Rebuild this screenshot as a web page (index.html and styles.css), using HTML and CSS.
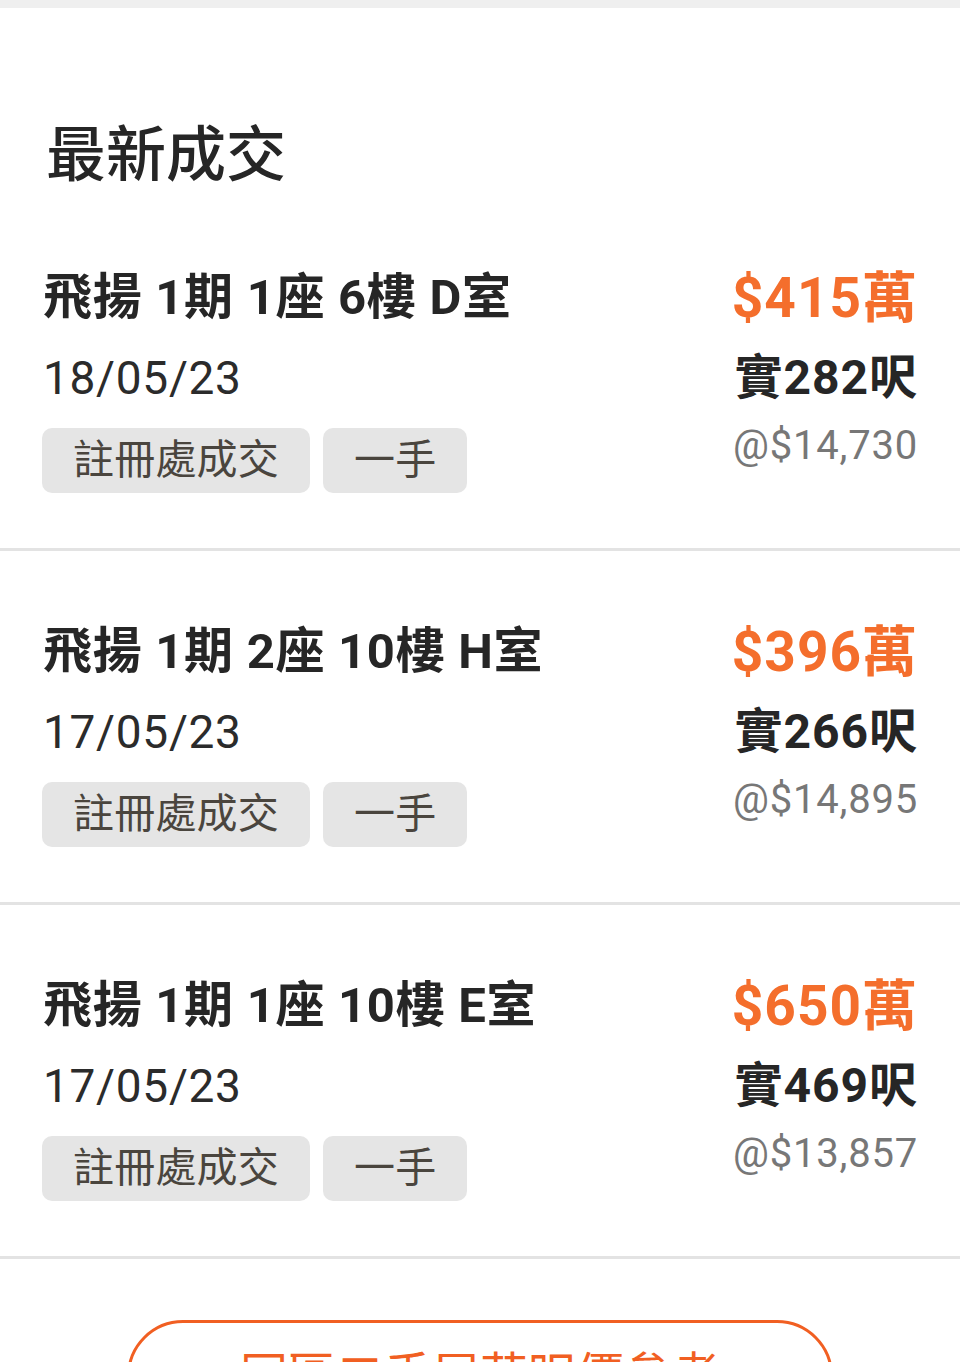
FILE: index.html
```html
<!DOCTYPE html>
<html lang="zh-Hant">
<head>
    <meta charset="UTF-8">
    <meta name="viewport" content="width=device-width, initial-scale=1.0">
    <title>最新成交</title>
    <link rel="stylesheet" href="styles.css">
</head>
<body>
    <div class="topbar"></div>

    <section class="deals">
        <h2 class="deals-title">最新成交</h2>

        <div class="deal">
            <div class="deal-info">
                <div class="deal-name">飛揚 1期 1座 6樓 D室</div>
                <div class="deal-date">18/05/23</div>
                <div class="tags">
                    <span class="tag">註冊處成交</span>
                    <span class="tag">一手</span>
                </div>
            </div>
            <div class="deal-price">
                <div class="price">$415萬</div>
                <div class="area">實282呎</div>
                <div class="unit">@$14,730</div>
            </div>
        </div>

        <div class="deal">
            <div class="deal-info">
                <div class="deal-name">飛揚 1期 2座 10樓 H室</div>
                <div class="deal-date">17/05/23</div>
                <div class="tags">
                    <span class="tag">註冊處成交</span>
                    <span class="tag">一手</span>
                </div>
            </div>
            <div class="deal-price">
                <div class="price">$396萬</div>
                <div class="area">實266呎</div>
                <div class="unit">@$14,895</div>
            </div>
        </div>

        <div class="deal">
            <div class="deal-info">
                <div class="deal-name">飛揚 1期 1座 10樓 E室</div>
                <div class="deal-date">17/05/23</div>
                <div class="tags">
                    <span class="tag">註冊處成交</span>
                    <span class="tag">一手</span>
                </div>
            </div>
            <div class="deal-price">
                <div class="price">$650萬</div>
                <div class="area">實469呎</div>
                <div class="unit">@$13,857</div>
            </div>
        </div>

        <div class="more">
            <a class="more-btn" href="#">同區二手屋苑呎價參考</a>
        </div>
    </section>
</body>
</html>
```

FILE: styles.css
```css
body {
    font-family: Roboto, "Noto Sans CJK TC", sans-serif;
    margin: 0;
    padding: 0;
    background-color: #fff;
    color: #262626;
}
.topbar {
    height: 8px;
    background-color: #efefef;
}
.deals-title {
    margin: 0;
    padding: 107px 42px 0 46px;
    font-size: 60px;
    font-weight: 500;
    line-height: 82px;
}
.deal {
    display: flex;
    justify-content: space-between;
    padding: 71px 42px 55px 42px;
    border-bottom: 3px solid #e3e3e3;
}
.deal-info {
    display: flex;
    flex-direction: column;
}
.deal-name {
    padding-left: 1px;
    font-size: 49px;
    font-weight: 700;
    line-height: 60px;
    letter-spacing: 0.7px;
}
.deal-date {
    margin-top: 20px;
    padding-left: 1px;
    font-size: 46px;
    line-height: 60px;
    letter-spacing: 0.7px;
    color: #2b2b2b;
}
.tags {
    display: flex;
    gap: 13px;
    margin-top: 20px;
}
.tag {
    height: 65px;
    padding: 0 31px;
    border-radius: 10px;
    background-color: #e5e5e5;
    color: #4a453e;
    font-size: 41px;
    line-height: 65px;
    letter-spacing: 0.2px;
}
.deal-price {
    display: flex;
    flex-direction: column;
    align-items: flex-end;
}
.price {
    font-size: 55px;
    font-weight: 700;
    line-height: 60px;
    letter-spacing: 1px;
    color: #f46e2c;
}
.area {
    margin-top: 20px;
    font-size: 48px;
    font-weight: 700;
    line-height: 60px;
    letter-spacing: 1px;
}
.unit {
    margin-top: 13px;
    font-size: 40px;
    line-height: 50px;
    letter-spacing: 0.8px;
    color: #777;
}
.more {
    display: flex;
    justify-content: center;
    padding-top: 61px;
}
.more-btn {
    width: 706px;
    box-sizing: border-box;
    padding: 18px 0;
    border: 3px solid #f15f22;
    border-radius: 60px;
    color: #f15f22;
    font-size: 48px;
    line-height: 70px;
    text-align: center;
    text-decoration: none;
}
```
